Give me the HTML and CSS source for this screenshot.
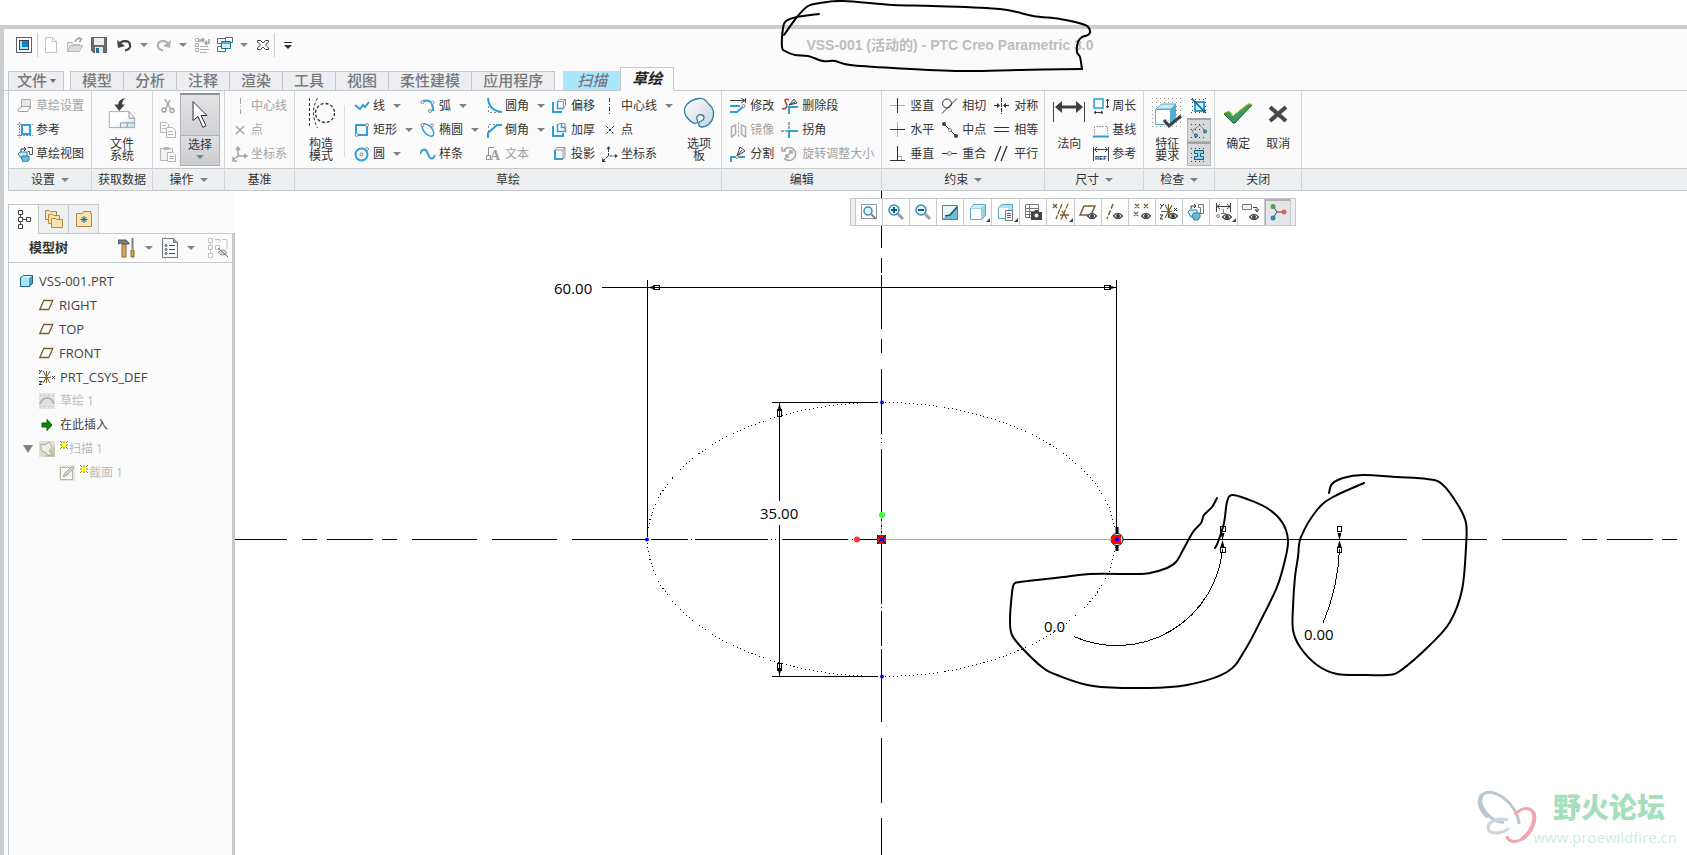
FILE: index.html
```html
<!DOCTYPE html>
<html lang="zh-CN">
<head>
<meta charset="UTF-8">
<title>VSS-001 (活动的) - PTC Creo Parametric 3.0</title>
<link rel="stylesheet" href="styles.css">
</head>
<body>
<svg width="0" height="0" class="defs">
  <symbol id="eye" viewBox="0 0 10 8"><path d="M.5 4q4.500-5.500 9 0-4.500 5-9 0z" fill="#fff" stroke="#3c4043" stroke-width="1.200"/><circle cx="5" cy="4" r="2" fill="#3c4043"/></symbol>
  <symbol id="plane" viewBox="0 0 15 14"><path d="M.8 11.500l4-9h9l-4 9z" fill="none" stroke="#7c5f2e" stroke-width="1.300"/></symbol>
  <symbol id="star" viewBox="0 0 8 8"><path d="M2 2h4v4H2z" fill="#ff0"/><path d="M0 0l2 2M4 0v2M8 0L6 2M0 4h2M8 4H6M0 8l2-2M4 8V6M8 8L6 6" stroke="#8a8a00"/></symbol>
</svg>
<div class="window">
  <header class="titlebar">
    <div class="quick">
      <button class="qbtn" title="窗口"><svg width="16" height="16" viewBox="0 0 16 16"><rect x=".5" y=".5" width="15" height="15" fill="#fff" stroke="#5c6063"/><rect x="3.5" y="3.5" width="9" height="9" fill="#b9e3f5" stroke="#3c4043"/><path d="M6 4h6v6H6z" fill="#0c86cc"/></svg></button>
      <span class="qsep"></span>
      <button class="qbtn new" title="新建"><svg width="16" height="18" viewBox="0 0 16 18"><path d="M2.500 1.500h7l4 4v11h-11z" fill="#fff" stroke="#c2c4c6"/><path d="M9.500 1.500v4h4" fill="none" stroke="#c2c4c6"/></svg></button>
      <button class="qbtn" title="打开"><svg width="18" height="16" viewBox="0 0 18 16"><path d="M1.500 14.500v-9h5l1 2h6v2" fill="#e7e8e9" stroke="#b9bbbd"/><path d="M1.500 14.500l3-6h12l-3 6z" fill="#d9dbdc" stroke="#b9bbbd"/><path d="M9 5c1-3 4-4 6-3M12.500 0l3 2-2 3" fill="none" stroke="#a4a6a8" stroke-width="1.500"/></svg></button>
      <button class="qbtn" title="保存"><svg width="16" height="16" viewBox="0 0 16 16"><path d="M.5.5h15v15h-13l-2-2z" fill="#6b6f72" stroke="#5b5f62"/><path d="M3 1h10v7H3z" fill="#eceeef"/><path d="M4 10h8v6H4z" fill="#dfe8ec"/><path d="M5 11h3v5H5z" fill="#2d6d8c"/></svg></button>
      <button class="qbtn undo" title="撤消"><svg width="17" height="14" viewBox="0 0 17 14"><path d="M3 7c2-5 10-5 11-.5 1 4-2 5.500-5 6" fill="none" stroke="#404447" stroke-width="2.200"/><path d="M1 2l1 8 7-2z" fill="#404447"/></svg></button>
      <i class="caret"></i>
      <button class="qbtn" title="重做"><svg width="17" height="14" viewBox="0 0 17 14"><path d="M14 7c-2-5-10-5-11-.5-1 4 2 5.500 5 6" fill="none" stroke="#b0b2b4" stroke-width="2.200"/><path d="M16 2l-1 8-7-2z" fill="#b0b2b4"/></svg></button>
      <i class="caret"></i>
      <button class="qbtn" title="重新生成"><svg width="16" height="16" viewBox="0 0 16 16" fill="none" stroke="#b0b2b4"><path d="M1.500 1.500h3v3h-3zM1.500 6.500h3v3h-3zM1.500 11.500h3v3h-3zM6 9.500h8M6 12.500h9M6 15.500h7"/><path d="M6 5V3h3M8 1l2 2-2 2M15 2v4h-4M13 4l-2 2 2 2" stroke="#a0a2a4" stroke-width="1.500"/></svg></button>
      <button class="qbtn" title="窗口列表"><svg width="16" height="16" viewBox="0 0 16 16"><g fill="#fff" stroke="#65696c"><path d="M.5 1.500h8v5h-8zM.5 9.500h8v5h-8zM8.500.5h7v5h-7z"/></g><path d="M4.500 4.500h9v7h-9z" fill="#d5effa" stroke="#19749f"/><path d="M5 5h8v2H5z" fill="#56b3dc"/></svg></button>
      <i class="caret"></i>
      <button class="qbtn closewin" title="关闭窗口"><svg width="12" height="12" viewBox="0 0 12 12"><path d="M.5 1.500h3L6 4l2.500-2.500h3v1.500L8.500 6l3 3v1.500h-3L6 8l-2.500 2.500h-3V9l3-3-3-3z" fill="#fff" stroke="#404447"/></svg></button>
      <span class="qsep"></span>
      <button class="qbtn custom" title="自定义"><svg width="10" height="9" viewBox="0 0 10 9"><path d="M1 1.500h8" stroke="#2d3033"/><path d="M1 4h8L5 8z" fill="#2d3033"/></svg></button>
    </div>
    <h1 class="title">VSS-001 (活动的) - PTC Creo Parametric 3.0</h1>
  </header>

  <nav class="tabs">
    <button class="tab file">文件<i class="caret dark"></i></button>
    <div class="tabset">
      <button class="tab">模型</button><button class="tab">分析</button><button class="tab">注释</button><button class="tab">渲染</button><button class="tab">工具</button><button class="tab">视图</button><button class="tab">柔性建模</button><button class="tab">应用程序</button>
    </div>
    <button class="tab scan">扫描</button>
    <button class="tab active">草绘</button>
  </nav>

  <div class="ribbon">
    <section class="group setup">
      <div class="tools">
        <div class="col">
          <button class="cmd" disabled><svg width="16" height="16" viewBox="0 0 16 16"><path d="M4.500 1.500h9v9h-9z" fill="#e6e7e8" stroke="#aaacae"/><path d="M.5 11.500l5-3h8l-3 5h-9z" fill="#fafafa" stroke="#9fa1a3"/></svg>草绘设置</button>
          <button class="cmd"><svg width="16" height="16" viewBox="0 0 16 16"><path d="M2.500 0v16M0 13.500h16M0 2.500h16" stroke="#8b8e90" stroke-dasharray="2 1"/><path d="M5 3h8v9H5z" fill="#fff" stroke="#2b9fd6" stroke-width="2"/></svg>参考</button>
          <button class="cmd"><svg width="16" height="16" viewBox="0 0 16 16"><path d="M4 6V3h4M7 1l2 2-2 2" fill="none" stroke="#33373a"/><path d="M10.500 1.500h5v7h-3v-3h-2" fill="none" stroke="#55595c"/><path d="M1 8l2-2h7v5l-2 2H5z" fill="#c8e8f5" stroke="#247fa8"/><path d="M4 11l2-1h6v4l-2 2H6z" fill="#6fb9d6" stroke="#247fa8"/></svg>草绘视图</button>
        </div>
      </div>
      <div class="label"><button>设置<i class="caret"></i></button></div>
    </section>

    <section class="group narrow">
      <div class="tools">
        <button class="big"><svg width="32" height="32" viewBox="0 0 32 34"><defs><linearGradient id="sheet" x2="1" y2="1"><stop offset=".5" stop-color="#fff"/><stop offset="1" stop-color="#b8d8e6"/></linearGradient></defs><path d="M2.500 15.500h21l6 7v10h-27z" fill="url(#sheet)" stroke="#a6a9ac"/><path d="M23.500 15.500v7h6M14.500 32.500v-5h15M21.500 28v4" fill="none" stroke="#8d9093"/><path d="M20 1c-6 1-8 4-8 7H8l5 7 6-7h-3c0-3 1-5 4-7z" fill="#3c4043"/></svg><span>文件<br>系统</span></button>
      </div>
      <div class="label">获取数据</div>
    </section>

    <section class="group ops">
      <div class="tools">
        <div class="col">
          <button class="cmd" disabled title="剪切"><svg width="16" height="16" viewBox="0 0 16 16" fill="none" stroke="#a3a5a7" stroke-width="1.500"><path d="M5 1l5 9M10 2L6 10"/><circle cx="4" cy="12" r="2"/><path d="M10 10l3 1"/><circle cx="12" cy="12.500" r="2"/></svg></button>
          <button class="cmd" disabled title="复制"><svg width="16" height="16" viewBox="0 0 16 16" fill="#fafafa" stroke="#b4b6b8"><path d="M.5.500h6l2 2v8h-8zM2 3.500h4M2 6.500h4"/><path d="M6.500 5.500h6l3 3v7h-9zM8 9.500h5M8 12.500h5"/></svg></button>
          <button class="cmd" disabled title="粘贴"><svg width="16" height="16" viewBox="0 0 16 16" fill="#f2f2f2" stroke="#b4b6b8"><path d="M.5 2.500h12v12H.5z"/><path d="M4 1.500h5v2H4z" fill="#b4b6b8"/><path d="M7.500 6.500h6l2 2v7h-8zM9 10.500h5M9 12.500h5" fill="#fff"/></svg></button>
        </div>
        <button class="select"><span class="select-icon"><svg width="18" height="30" viewBox="0 0 18 30"><path d="M2 1.500v19l5-4 5 11 3-2-5-10h6z" fill="#fff" stroke="#2c2f32"/></svg></span><span class="select-text">选择<i class="caret"></i></span></button>
      </div>
      <div class="label"><button>操作<i class="caret"></i></button></div>
    </section>

    <section class="group">
      <div class="tools">
        <div class="col">
          <button class="cmd" disabled><svg width="16" height="16" viewBox="0 0 16 16"><path d="M8.500 0v16" stroke="#a3a5a7" stroke-dasharray="6 2 1 2"/></svg>中心线</button>
          <button class="cmd" disabled><svg width="16" height="16" viewBox="0 0 16 16"><path d="M4 4l8 8M12 4l-8 8" stroke="#a3a5a7" stroke-width="1.500"/></svg>点</button>
          <button class="cmd" disabled><svg width="16" height="16" viewBox="0 0 16 16" fill="none" stroke="#a3a5a7" stroke-width="1.500"><path d="M6 2v8h8M6 10l-5 4M4 4l2-3 2 3M12 8l3 2-3 2M1 11v4h4"/></svg>坐标系</button>
        </div>
      </div>
      <div class="label">基准</div>
    </section>

    <section class="group sketch">
      <div class="tools">
        <button class="big"><svg width="28" height="32" viewBox="0 0 28 32" fill="none" stroke="#2d3033" stroke-dasharray="3 2"><path d="M2.500 1v30M10.500 1q-8 14 0 30"/><circle cx="18" cy="16" r="9.500" stroke-width="1.300"/></svg><span>构造<br>模式</span></button>
        <i class="vsep"></i>
        <div class="col">
          <button class="cmd"><svg width="16" height="16" viewBox="0 0 16 16"><path d="M1 7l5 4 3-4 2 2 4-5" fill="none" stroke="#2b9fd6" stroke-width="2"/></svg>线<i class="caret"></i></button>
          <button class="cmd"><svg width="16" height="16" viewBox="0 0 16 16"><path d="M2 3h11v10H2z" fill="none" stroke="#2b9fd6" stroke-width="2"/><g fill="#fff" stroke="#85888a"><circle cx="13" cy="3" r="1.500"/><circle cx="2.500" cy="13" r="1.500"/></g></svg>矩形<i class="caret"></i></button>
          <button class="cmd"><svg width="16" height="16" viewBox="0 0 16 16"><circle cx="7.500" cy="8.500" r="6" fill="none" stroke="#2b9fd6" stroke-width="2"/><circle cx="7.500" cy="8.500" r="1.500" fill="#fff" stroke="#73777a"/><circle cx="13" cy="3" r="1.500" fill="#fff" stroke="#85888a"/></svg>圆<i class="caret"></i></button>
        </div>
        <div class="col">
          <button class="cmd"><svg width="16" height="16" viewBox="0 0 16 16"><path d="M3 3q10-3 10 10" fill="none" stroke="#2b9fd6" stroke-width="2"/><g fill="#fff" stroke="#85888a"><circle cx="2.500" cy="4" r="1.500"/><circle cx="12.500" cy="4.500" r="1.500"/><circle cx="10" cy="13" r="1.500"/></g></svg>弧<i class="caret"></i></button>
          <button class="cmd"><svg width="16" height="16" viewBox="0 0 16 16"><ellipse cx="8" cy="8" rx="7.500" ry="4" transform="rotate(48 8 8)" fill="none" stroke="#2b9fd6" stroke-width="1.500"/><g fill="#fff" stroke="#85888a"><circle cx="2.500" cy="3" r="1.500"/><circle cx="12" cy="3.500" r="1.500"/></g></svg>椭圆<i class="caret"></i></button>
          <button class="cmd"><svg width="16" height="16" viewBox="0 0 16 16"><path d="M0 8c2-6 6-6 8 0s5 6 7 1" fill="none" stroke="#2b9fd6" stroke-width="2"/></svg>样条</button>
        </div>
        <div class="col">
          <button class="cmd"><svg width="16" height="16" viewBox="0 0 16 16"><path d="M2.500 0v14.500H16" fill="none" stroke="#8b8e90" stroke-dasharray="2 2"/><path d="M2 0q1 13 14 14" fill="none" stroke="#2b9fd6" stroke-width="2"/></svg>圆角<i class="caret"></i></button>
          <button class="cmd"><svg width="16" height="16" viewBox="0 0 16 16"><path d="M2.500 10V2.500H10" fill="none" stroke="#8b8e90" stroke-dasharray="2 2"/><path d="M2 16v-5l9-8h5" fill="none" stroke="#2b9fd6" stroke-width="2"/></svg>倒角<i class="caret"></i></button>
          <button class="cmd" disabled><svg width="16" height="16" viewBox="0 0 16 16"><path d="M.5 9.500h4v4h-4zM2.500 9V1.500H8" fill="none" stroke="#8b8e90"/><text x="4" y="14" class="glyph-a">A</text></svg>文本</button>
        </div>
        <div class="col">
          <button class="cmd"><svg width="16" height="16" viewBox="0 0 16 16" fill="none"><path d="M1 4v10h9" stroke="#2b9fd6" stroke-width="2"/><path d="M5.500 3v7.500H12" stroke="#2b9fd6" stroke-width="1.500"/><path d="M5.500 3.500l2-2h6v6l-2 3v-7h-6M11.500 3.500l2-2" stroke="#909396"/></svg>偏移</button>
          <button class="cmd"><svg width="16" height="16" viewBox="0 0 16 16" fill="none"><path d="M1 4v10h10v-3" stroke="#2b9fd6" stroke-width="2"/><path d="M5.500 2v7.500h8V5.500h-4V2" stroke="#2b9fd6" stroke-width="1.500"/><path d="M6 2.500l2-1h5v7" stroke="#909396"/></svg>加厚</button>
          <button class="cmd"><svg width="16" height="16" viewBox="0 0 16 16" fill="none"><path d="M3 4v9h8" stroke="#2b9fd6" stroke-width="2"/><path d="M3 3.500l2-2h8v9L11 13V4H3M11 4l2-2" stroke="#909396"/></svg>投影</button>
        </div>
        <div class="col">
          <button class="cmd"><svg width="16" height="16" viewBox="0 0 16 16"><path d="M7.500 0v16" stroke="#2d3033" stroke-dasharray="4 2 1 2"/></svg>中心线<i class="caret"></i></button>
          <button class="cmd"><svg width="16" height="16" viewBox="0 0 16 16"><path d="M4 4l8 8M12 4l-8 8" stroke="#2d3033" stroke-dasharray="3 1"/></svg>点</button>
          <button class="cmd"><svg width="16" height="16" viewBox="0 0 16 16" fill="none" stroke="#3c4043"><path d="M6.500 3v7H13M6 10l-5 5" stroke-dasharray="3 1"/><path d="M4.500 3h4l-2-3zM13 8v4l3-2zM0 12v4h4z" fill="#3c4043" stroke="none"/></svg>坐标系</button>
        </div>
        <button class="big palette"><svg width="32" height="32" viewBox="0 0 32 32"><defs><linearGradient id="pal" x2="1" y2="1"><stop offset="0" stop-color="#fff"/><stop offset="1" stop-color="#c4d3da"/></linearGradient></defs><path d="M16 1.500c5-1 8 3 10 6 5 4 5 8 4 13-1 5-6 9-11 9.500-4 0-4-4-2-5.500 3-1 4-2 4-4 0-3-5-4-7-1-1 3 2 5 0 6.500-4 2-8-3-11-7C-2 10 6 3 16 1.500z" fill="url(#pal)" stroke="#2a7ca5" stroke-width="1.300"/></svg><span>选项<br>板</span></button>
      </div>
      <div class="label">草绘</div>
    </section>

    <section class="group edit">
      <div class="tools">
        <div class="col">
          <button class="cmd"><svg width="18" height="16" viewBox="0 0 18 16" fill="none"><path d="M1 2.500h15M16.500 0v5M12 0l4 2.500-4 2.500" stroke="#3c4043"/><path d="M1 8h10M1 14h7l7-6" stroke="#2b9fd6" stroke-width="2"/><circle cx="14.500" cy="8" r="1.500" stroke="#85888a" fill="#fff"/></svg>修改</button>
          <button class="cmd" disabled><svg width="18" height="16" viewBox="0 0 18 16" fill="none" stroke="#aeb0b2"><path d="M9.500 0v16" stroke-dasharray="3 1"/><path d="M2.500 5l4-2v9l-4 3zM16.500 5l-4-2v9l4 3z" stroke-width="1.500"/></svg>镜像</button>
          <button class="cmd"><svg width="18" height="16" viewBox="0 0 18 16" fill="none"><path d="M2 16v-5h5M10 11h6" stroke="#2b9fd6" stroke-width="2"/><path d="M8 10l3-9 5 4zM8 10l5-6" stroke="#3c4043"/><circle cx="8" cy="11" r="1.500" fill="#fff" stroke="#85888a"/></svg>分割</button>
        </div>
        <div class="col">
          <button class="cmd"><svg width="18" height="16" viewBox="0 0 18 16" fill="none"><path d="M8 2c-4-2-5 0-3 3s1 6-4 6" stroke="#a8443f" stroke-width="1.500"/><path d="M8 16V9h9" stroke="#2b9fd6" stroke-width="2"/><path d="M8 7l5-6 3 4zM8 7l6-3" stroke="#3c4043"/></svg>删除段</button>
          <button class="cmd"><svg width="18" height="16" viewBox="0 0 18 16" fill="none"><path d="M8 0v7M0 9h7" stroke="#a3a5a7" stroke-width="2" stroke-dasharray="3 1"/><path d="M8 16V9h9" stroke="#2b9fd6" stroke-width="2"/></svg>拐角</button>
          <button class="cmd" disabled><svg width="18" height="16" viewBox="0 0 18 16" fill="none" stroke="#a3a5a7" stroke-width="1.500"><path d="M3 12A6.500 6.500 0 1 0 3 4M1 1v4h4M5 11l6-6M11 8V5H8M5 8v3h3"/></svg>旋转调整大小</button>
        </div>
      </div>
      <div class="label">编辑</div>
    </section>

    <section class="group constrain">
      <div class="tools">
        <div class="col">
          <button class="cmd"><svg width="18" height="16" viewBox="0 0 18 16"><path d="M1 7.500h15" stroke="#a9acae"/><path d="M8.500 0v15" stroke="#2d3033"/></svg>竖直</button>
          <button class="cmd"><svg width="18" height="16" viewBox="0 0 18 16"><path d="M8.500 0v15" stroke="#a9acae"/><path d="M1 7.500h15" stroke="#2d3033"/></svg>水平</button>
          <button class="cmd"><svg width="18" height="16" viewBox="0 0 18 16"><path d="M9 10.500h3.500V14" fill="none" stroke="#a9acae"/><path d="M8.500 0v14M1 14.500h15" stroke="#2d3033"/></svg>垂直</button>
        </div>
        <div class="col">
          <button class="cmd"><svg width="18" height="16" viewBox="0 0 18 16" fill="none" stroke="#2d3033"><circle cx="6" cy="5.500" r="4.500"/><path d="M1 15.500L16 .5"/></svg>相切</button>
          <button class="cmd"><svg width="18" height="16" viewBox="0 0 18 16"><path d="M3 2l12 12" stroke="#3c4043"/><circle cx="3" cy="2" r="2" fill="#3c4043"/><circle cx="15" cy="14" r="2" fill="#3c4043"/><circle cx="9" cy="8" r="1.500" fill="#fff" stroke="#85888a"/></svg>中点</button>
          <button class="cmd"><svg width="18" height="16" viewBox="0 0 18 16"><path d="M1 7.500h15" stroke="#2d3033"/><circle cx="8.500" cy="7.500" r="2" fill="#eee" stroke="#85888a"/></svg>重合</button>
        </div>
        <div class="col">
          <button class="cmd"><svg width="18" height="16" viewBox="0 0 18 16"><path d="M8.500 0v16" stroke="#2d3033" stroke-dasharray="4 1"/><path d="M1 7.500h5M11 7.500h5" stroke="#2d3033"/><path d="M4 5l3 2.500L4 10zM13 5l-3 2.500 3 2.500z" fill="#2d3033"/></svg>对称</button>
          <button class="cmd"><svg width="18" height="16" viewBox="0 0 18 16"><path d="M1 5.500h15M1 9.500h15" stroke="#2d3033"/></svg>相等</button>
          <button class="cmd"><svg width="18" height="16" viewBox="0 0 18 16"><path d="M2 15L8 0M8 15l6-15" stroke="#2d3033" stroke-width="1.300"/></svg>平行</button>
        </div>
      </div>
      <div class="label"><button>约束<i class="caret"></i></button></div>
    </section>

    <section class="group size">
      <div class="tools">
        <button class="big"><svg width="32" height="32" viewBox="0 0 32 32"><path d="M.5 5v20M31.500 5v20" stroke="#3c4043"/><path d="M4 10h24" stroke="#3c4043" stroke-width="3"/><path d="M2 10l7-6v12zM30 10l-7-6v12z" fill="#3c4043"/></svg><span>法向</span></button>
        <div class="col">
          <button class="cmd"><svg width="16" height="16" viewBox="0 0 16 16" fill="none"><path d="M1 1h9v9H1z" stroke="#2b9fd6" stroke-width="1.500"/><path d="M14.500 1v9M13 3l1.500-2L16 3M13 8l1.500 2L16 8M1 14.500h9M3 13l-2 1.500L3 16M8 13l2 1.500L8 16" stroke="#3c4043"/></svg>周长</button>
          <button class="cmd"><svg width="16" height="16" viewBox="0 0 16 16" fill="none"><path d="M1.500 12V4.500h13V12" stroke="#9b9ea0" stroke-dasharray="2 1"/><path d="M0 14.500h16" stroke="#2b9fd6" stroke-width="2"/></svg>基线</button>
          <button class="cmd"><svg width="16" height="16" viewBox="0 0 16 16" fill="none"><path d="M.5 1v14M15.500 1v14M2 3.500h12M4 1L1.500 3.500 4 6M12 1l2.500 2.500L12 6" stroke="#3c4043"/><text x="2" y="14" class="glyph-ref">REF</text></svg>参考</button>
        </div>
      </div>
      <div class="label"><button>尺寸<i class="caret"></i></button></div>
    </section>

    <section class="group check">
      <div class="tools">
        <button class="big"><svg width="32" height="32" viewBox="0 0 32 32"><path d="M1 1.500h30M1 5.500h30M1 9.500h30M1 13.500h30M1 17.500h30M1 21.500h30M1 25.500h30M1 29.500h30" stroke="#9b9ea0" stroke-dasharray="1 3"/><path d="M5 12l6-5h14l-5 5z" fill="#c8ecf8" stroke="#57aacb"/><path d="M20 12l5-5v14l-5 7z" fill="#55aed2"/><path d="M4.500 12.500h15v15h-15z" fill="#fff" stroke="#57aacb"/><path d="M13 23l5 6L30 19" fill="none" stroke="#3c4043" stroke-width="3"/></svg><span>特征<br>要求</span></button>
        <div class="col">
          <button class="toggle" title="重叠几何"><svg width="16" height="16" viewBox="0 0 16 16"><path d="M0 1.500h16M0 14.500h16M1.500 0v16M14.500 0v16" stroke="#3c4043" stroke-dasharray="1 3"/><path d="M4 4h9v9H4z" fill="#d9f1fb" stroke="#2b9fd6" stroke-width="2"/><path d="M1 1l14 14" stroke="#155a7d" stroke-width="1.500"/></svg></button>
          <button class="toggle on" title="突出显示开放端"><svg width="16" height="16" viewBox="0 0 16 16"><path d="M0 1.500h16M0 6.500h16M0 14.500h16" stroke="#3c4043" stroke-dasharray="1 3"/><path d="M4 12L1 8l8-6 5 6" fill="none" stroke="#85888a"/><g fill="#45b2e0" stroke="#155a7d"><circle cx="5" cy="12.500" r="1.500"/><circle cx="14" cy="8.500" r="1.500"/></g></svg></button>
          <button class="toggle on" title="着色封闭环"><svg width="16" height="16" viewBox="0 0 16 16"><path d="M0 1.500h16M0 6.500h16M0 10.500h16M0 14.500h16" stroke="#3c4043" stroke-dasharray="1 3"/><path d="M3.500 3.500h9v3h-3v3h3v3h-9v-3h3v-3h-3z" fill="#8fd3ee" stroke="#155a7d"/></svg></button>
        </div>
      </div>
      <div class="label"><button>检查<i class="caret"></i></button></div>
    </section>

    <section class="group close">
      <div class="tools">
        <button class="big"><svg width="32" height="32" viewBox="0 0 32 32"><path d="M2 17l5-3 4 5L26 7l4 1L13 26h-2z" fill="#3a9b62" stroke="#2a5c30"/><path d="M2 16l5-2 4 5L26 7h4" fill="none" stroke="#c9e600"/></svg><span>确定</span></button>
        <button class="big"><svg width="32" height="32" viewBox="0 0 32 32"><path d="M8 10l16 14M24 10L8 24" stroke="#45494c" stroke-width="4"/></svg><span>取消</span></button>
      </div>
      <div class="label">关闭</div>
    </section>
    <div class="rest"><div class="label"></div></div>
  </div>

  <main class="main">
    <aside class="side">
      <div class="side-tabs">
        <button class="stab current" title="模型树"><svg width="16" height="20" viewBox="0 0 16 20" fill="none" stroke="#3c4043"><path d="M1.500 1.500h4v4h-4zM1.500 8.500h4v4h-4zM1.500 15.500h4v4h-4zM9.500 8.500h4v4h-4zM3.500 6v2M3.500 13v2M6 10.500h3"/></svg></button>
        <button class="stab" title="文件夹浏览器"><svg width="20" height="20" viewBox="0 0 20 20" fill="#fae3b2" stroke="#b08a48"><path d="M1.500 10.500v-9h4l1 1h6v8z"/><path d="M4.500 14.500v-9h4l1 1h6v8z"/><path d="M7.500 18.500v-9h4l1 1h6v8z"/></svg></button>
        <button class="stab" title="收藏夹"><svg width="18" height="18" viewBox="0 0 18 18"><path d="M1.500 16.500v-13h6l1-2h7v2h1v13z" fill="#fae3b2" stroke="#b08a48"/><path d="M9 6v7M5.500 9.500h7M6.500 7l5 5M11.500 7l-5 5" stroke="#12688f"/></svg></button>
      </div>
      <div class="panel">
        <div class="panel-head">
          <h2>模型树</h2>
          <button class="pbtn" title="设置"><svg width="18" height="20" viewBox="0 0 18 20"><path d="M4 6h4v13H4z" fill="#d9a860" stroke="#8a6226"/><path d="M0 2h8l3 3v1H8L3 5 0 6z" fill="#7d8082" stroke="#505356"/><path d="M14.500 0v11" stroke="#7d8082" stroke-width="2"/><path d="M13 12h3v7h-3z" fill="#d9a860" stroke="#8a6226"/></svg></button>
          <i class="caret"></i>
          <button class="pbtn" title="显示"><svg width="16" height="20" viewBox="0 0 16 20"><path d="M.5.5h11l4 4v15H.5z" fill="#f4f8fa" stroke="#73777a"/><path d="M11.500.5v4h4" fill="#8fb3c4" stroke="#73777a"/><path d="M7 7.500h6M7 11.500h6M7 15.500h6" stroke="#505356"/><g fill="none" stroke="#505356"><circle cx="4" cy="7.500" r="1"/><circle cx="4" cy="11.500" r="1"/><circle cx="4" cy="15.500" r="1"/></g></svg></button>
          <i class="caret"></i>
          <button class="pbtn last" title="过滤"><svg width="20" height="20" viewBox="0 0 20 20" fill="none" stroke="#c0c2c4"><path d="M.5.500h4v4h-4zM.5 7.500h4v4h-4zM.5 15.500h4v4h-4zM2.500 5v2M2.500 12v3M7.500 7.500h4v4h-4zM7 1.500h5v3M14 1.500h5v10"/><path d="M10 14.500q5-5 9 0-4 5-9 0z" fill="#ddd" stroke="#8a8d90"/><path d="M10 10l10 9" stroke="#606366"/></svg></button>
        </div>
        <ul class="tree">
          <li class="latin"><svg width="15" height="14" viewBox="0 0 15 14"><path d="M1.500 3.500l3-2h9v8l-3 3h-9z" fill="#3ba3cb" stroke="#22617d"/><path d="M2 4h8v8H2z" fill="#a5e6fb"/><path d="M2 3.500L4.500 2H13l-3 2z" fill="#dff6fd"/></svg>VSS-001.PRT</li>
          <li class="l1 latin"><svg width="15" height="14"><use href="#plane"/></svg>RIGHT</li>
          <li class="l1 latin"><svg width="15" height="14"><use href="#plane"/></svg>TOP</li>
          <li class="l1 latin"><svg width="15" height="14"><use href="#plane"/></svg>FRONT</li>
          <li class="l1 latin"><svg width="16" height="16" viewBox="0 0 16 16" fill="none"><path d="M0 8.500h12M7.500 2v12M4 2l7 12M11 2L4 14" stroke="#7c5f2e"/><path d="M0 1l1.500 2L3 1M1.500 3L0 5M13 7l3 3M16 7l-3 3M0 12.500h3l-3 3h3" stroke="#2d3033"/></svg>PRT_CSYS_DEF</li>
          <li class="l1 off"><svg width="16" height="16" viewBox="0 0 16 16"><path d="M0 0h16v16H0z" fill="#e2e2e0"/><path d="M1 2.500h15M1 13.500h15" stroke="#b5b5b0" stroke-dasharray="1 3"/><path d="M1 11q2-6 7-6t7 6" fill="none" stroke="#b9b7a3" stroke-width="2"/></svg>草绘 1</li>
          <li class="l1"><svg width="16" height="14" viewBox="0 0 16 14"><path d="M3 5h5V1.500L13 7l-5 5.500V9H3z" fill="#078a07" stroke="#0a5c0a"/></svg>在此插入</li>
          <li class="open off"><i class="twisty"></i><svg width="16" height="16" viewBox="0 0 16 16"><path d="M0 0h16v16H0z" fill="#dedede"/><path d="M16 5v11H4z" fill="#c9c8b4"/><path d="M2 3l4 1 4-3 3 5-3 4 4 4H9l-3-3H4L2 8z" fill="#f0efe2" stroke="#a9a892"/></svg><span class="new"><svg width="8" height="8"><use href="#star"/></svg></span>扫描 1</li>
          <li class="l2 off"><svg width="16" height="16" viewBox="0 0 16 16"><path d="M0 0h16v16H0z" fill="#e6e6e4"/><path d="M1.500 2.500h12v12h-12z" fill="#fafafa" stroke="#b9b7a3"/><path d="M4 12l2-4 7-7 2 2-7 7z" fill="#d6d5c8" stroke="#a9a892"/></svg><span class="new"><svg width="8" height="8"><use href="#star"/></svg></span>截面 1</li>
        </ul>
      </div>
    </aside>

    <div class="canvas">
      <svg class="drawing" width="100%" height="100%">
        <g transform="translate(-235 -191)">
          <path class="ln" d="M235 539.500h52M302 539.500h15M327 539.500h46M382 539.500h15M412 539.500h65M492 539.500h65M572 539.500h76M651 539.500h37M691 539.500h1M695 539.500h73M771 539.500h1M775 539.500h1M782 539.500h66M852 539.500h1M857 539.500h25M1117 539.500h290M1422 539.500h65M1502 539.500h65M1582 539.500h15M1607 539.500h46M1662 539.500h15"/>
          <path class="ln" d="M881.500 191v22M881.500 226v22M881.500 258v15M881.500 275v54M881.500 339v14M881.500 369v65M881.500 438v1M881.500 442v1M881.500 449v155M881.500 607v1M881.500 611v35M881.500 649v73M881.500 738v65M881.500 818v37"/>
          <ellipse class="ln" cx="881.500" cy="539.500" rx="234" ry="137" stroke-dasharray="1 3"/>
          <path class="ln" d="M602 287.500h514M647.500 280v257M1116.500 280v250M772 402.500h106M772 676.500h106M779.500 403v98M779.500 525v151"/>
          <path class="tip" d="M648 287.500l7-2v4zM1116 287.500l-7-2v4zM779.500 403l-2 8h4zM779.500 676l-2-8h4zM1222.500 540l-2-7h4zM1222.500 540l-2 7h4zM1339.500 540l-2-7h4zM1339.500 540l-2 7h4z"/>
          <path class="ln" d="M653.500 285.500h6v4h-6zM1104.500 285.500h6v4h-6zM777.500 409.500h4v7h-4zM777.500 663.500h4v7h-4zM1220.500 526.500h5v5h-5zM1220.500 547.500h5v5h-5zM1337.500 526.500h4v5h-4zM1337.500 547.500h4v5h-4z"/>
          <path d="M882 539.500h228" stroke="#f5a623"/>
          <path d="M881.500 515v23" stroke="#2ee62e" stroke-dasharray="4 2"/>
          <path class="ln" d="M1074 636.500A106 106 0 0 0 1222.500 549M1323 623Q1338 588 1339.500 549"/>
          <circle cx="857" cy="539.500" r="3" fill="#f33"/>
          <circle cx="882" cy="515" r="3" fill="#3f3"/>
          <path d="M877 535h9v9h-9z" fill="#f00"/>
          <path class="ln" d="M877 535l9 9M886 535l-9 9"/>
          <path d="M1117 527v24" stroke="#000" stroke-width="3"/>
          <circle cx="1117" cy="539.500" r="6" fill="#fff" stroke="#000"/>
          <path d="M1112 535h9v9h-9z" fill="#f00"/>
          <g fill="#00f"><circle cx="647" cy="539.500" r="2"/><circle cx="882" cy="402.500" r="2"/><circle cx="882" cy="676.500" r="2"/><circle cx="882" cy="539.500" r="2"/><circle cx="1117" cy="539.500" r="2"/></g>
          <g class="dim"><text x="554" y="294">60.00</text><text x="760" y="519">35.00</text><text x="1044" y="632">0.0</text><text x="1304" y="640">0.00</text></g>
        </g>
      </svg>

      <div class="viewbar">
        <button title="重新调整"><svg width="18" height="18" viewBox="0 0 18 18" fill="none"><path d="M1.500 1.500h15v14h-15z" stroke="#909396"/><circle cx="8" cy="8" r="4" fill="#e4f5fb" stroke="#348eb5" stroke-width="1.500"/><path d="M11 11l5 5" stroke="#85888a" stroke-width="2"/></svg></button>
        <button title="放大"><svg width="18" height="18" viewBox="0 0 18 18" fill="none"><circle cx="7" cy="7" r="5" fill="#e4f5fb" stroke="#348eb5" stroke-width="1.500"/><path d="M4 7h6M7 4v6" stroke="#155a7d" stroke-width="2"/><path d="M11 11l5 5" stroke="#9b9ea0" stroke-width="3"/></svg></button>
        <button title="缩小"><svg width="18" height="18" viewBox="0 0 18 18" fill="none"><circle cx="7" cy="7" r="5" fill="#e4f5fb" stroke="#348eb5" stroke-width="1.500"/><path d="M4 7h6" stroke="#155a7d" stroke-width="2"/><path d="M11 11l5 5" stroke="#9b9ea0" stroke-width="3"/></svg></button>
        <button title="重画"><svg width="18" height="18" viewBox="0 0 18 18"><path d="M1.500 2.500h15v14h-15z" fill="#74bbd6" stroke="#73777a"/><path d="M2 3h14L8 12l-6 3z" fill="#edf6fa"/><path d="M16 4l-7 8-5 1" fill="none" stroke="#155a7d" stroke-width="1.500"/></svg></button>
        <button class="more" title="显示样式"><svg width="18" height="18" viewBox="0 0 18 18"><path d="M1.500 5.500l3-4h12v11l-4 4h-11z" fill="#9fd0e2" stroke="#57aacb"/><path d="M2 6h10v10H2z" fill="#fff"/><path d="M2 5l3-3h11l-4 3z" fill="#d5eef7"/></svg></button>
        <button class="more" title="已保存方向"><svg width="18" height="18" viewBox="0 0 18 18"><path d="M1.500 4.500l3-3h11v11l-3 3h-11z" fill="#b9dfec" stroke="#57aacb"/><path d="M2 5h9v10H2z" fill="#fff"/><path d="M8.500 7.500h7v10h-7z" fill="#fff" stroke="#73777a"/><path d="M10 10.500h4M10 12.500h4M10 14.500h4" stroke="#55595c"/></svg></button>
        <button title="视图管理器"><svg width="18" height="18" viewBox="0 0 18 18"><path d="M1.500 1.500h13v13h-13zM2 5.500h12M2 8.500h12M2 11.500h12M5.500 2v12" fill="#fff" stroke="#73777a"/><path d="M7 9h3l1-2h3l1 2h3v8H7z" fill="#404447"/><circle cx="12.500" cy="12.500" r="2" fill="#eee"/></svg></button>
        <button class="more" title="基准显示过滤器"><svg width="18" height="18" viewBox="0 0 18 18" fill="none" stroke="#7c5f2e" stroke-width="1.300"><path d="M1 1l4 4M5 1L1 5"/><path d="M10 1L4 16M16 1L9 17" stroke-dasharray="5 1"/><path d="M8 12h9M10 8l5 8"/></svg></button>
        <button title="平面显示"><svg width="18" height="18" viewBox="0 0 18 18" fill="none"><path d="M1 12l4-9h11l-4 9z" stroke="#7c5f2e" stroke-width="1.500"/><use href="#eye" x="8" y="9" width="10" height="8"/></svg></button>
        <button title="轴显示"><svg width="18" height="18" viewBox="0 0 18 18" fill="none"><path d="M7 1L1 16" stroke="#7c5f2e" stroke-width="1.500" stroke-dasharray="5 2"/><use href="#eye" x="7" y="9" width="10" height="8"/></svg></button>
        <button title="点显示"><svg width="18" height="18" viewBox="0 0 18 18" fill="none"><path d="M2 1l4 4M6 1L2 5M11 1l4 4M15 1l-4 4M1 9l4 4M5 9l-4 4" stroke="#7c5f2e" stroke-width="1.300"/><use href="#eye" x="8" y="9" width="10" height="8"/></svg></button>
        <button title="坐标系显示"><svg width="18" height="18" viewBox="0 0 18 18" fill="none"><path d="M1 8.500h11M8.500 1v14M5 2l6 10M12 2L5 15" stroke="#7c5f2e" stroke-width="1.200"/><path d="M0 1l2 2 2-2M2 3L0 6M14 5l3 3M17 5l-3 3M0 12h3l-3 4h3" stroke="#2d3033"/><use href="#eye" x="8" y="9" width="10" height="8"/></svg></button>
        <button title="草绘视图"><svg width="18" height="18" viewBox="0 0 18 18"><path d="M4 6V3h5M7 1l2 2-2 2" fill="none" stroke="#33373a"/><path d="M11.500 1.500h5v9h-3v-6h-2z" fill="#fff" stroke="#73777a"/><path d="M1 9l2-2h7v5l-2 2H4z" fill="#d5eef7" stroke="#247fa8"/><path d="M5 12l2-2h6v4l-2 3H7z" fill="#6fb9d6" stroke="#247fa8"/></svg></button>
        <button class="more" title="草绘器显示过滤器"><svg width="18" height="18" viewBox="0 0 18 18" fill="none"><path d="M1.500 0v9M15.500 0v9M2 3.500h13M5 1L2 3.500 5 6M12 1l3 2.500L12 6" stroke="#3c4043"/><path d="M6 10.500h5M8.500 6v4" stroke="#2b9fd6"/><circle cx="3" cy="13" r="1.500" fill="#eee" stroke="#85888a"/><use href="#eye" x="7" y="10" width="10" height="8"/></svg></button>
        <button title="注释显示"><svg width="18" height="18" viewBox="0 0 18 18" fill="none"><path d="M.5 1.500h9v5h-9z" fill="#fef1cf" stroke="#73777a"/><path d="M11 4.500h4v4M13 6l2 3 2-3" stroke="#3c4043"/><use href="#eye" x="7" y="10" width="10" height="8"/></svg></button>
        <button class="on" title="旋转中心"><svg width="18" height="18" viewBox="0 0 18 18"><path d="M4 3l4 6h6M8 9l-4 6" fill="none" stroke="#3c4043"/><circle cx="4" cy="3.500" r="2.500" fill="#4fa04a"/><circle cx="15" cy="9" r="2.500" fill="#e0605a"/><circle cx="4" cy="15" r="2.500" fill="#2e88b8"/></svg></button>
      </div>

      <div class="watermark">
        <svg width="60" height="58" viewBox="0 0 60 58" fill="none"><path d="M42 35C41 14 14-4 5 6c-6 10 10 29 22 27" stroke="#b9c7d3" stroke-width="3"/><path d="M5 6c-5 7-1 16 6 22" stroke="#b9c7d3" stroke-width="4"/><path d="M38 26c5-7 14-9 18-3 4 8-2 21-11 27-7 4-14 3-15-3" stroke="#f0a8ac" stroke-width="3"/><path d="M56 23c4 8-2 21-11 27" stroke="#f0a8ac" stroke-width="4"/><path d="M31 31c-9-3-20 1-20 8 1 7 15 6 21 0" stroke="#ced5de" stroke-width="3"/></svg>
        <div class="wm-text"><strong>野火论坛</strong><span>www.proewildfire.cn</span></div>
      </div>
    </div>
  </main>
</div>

<svg class="ink-layer" width="100%" height="100%">
  <path class="ink" data-pts="819,14 797,17 786,21 783,28 782,47 785,51 795,55 808,56 823,61 835,61 850,65 893,68 960,71 1020,70 1082,69"/>
  <path class="ink" data-pts="1082,69 1080,57 1077,52 1078,42 1082,37 1088,35 1090,31 1085,25 1060,19 1033,16 1000,9 933,6 893,5 843,1 820,3 808,6 797,17 784,35"/>
  <path class="ink" data-pts="1217,498 1212,507 1204,515 1201,523 1193,532 1183,550 1176,562 1167,568 1150,573 1137,574 1090,574 1063,577 1037,580 1020,582 1014,584 1012,593 1010,620 1012,635 1023,649 1042,667 1057,675 1093,686 1147,688 1187,685 1227,672 1245,650 1263,616 1277,587 1285,560 1288,540 1282,522 1267,508 1247,499 1232,495 1227,502 1224,523 1218,542 1215,548"/>
  <path class="ink" data-pts="1329,493 1332,484 1343,478 1363,475 1397,477 1427,479 1442,484 1458,505 1466,523 1466,547 1462,590 1450,622 1430,645 1400,671 1387,675 1367,675 1337,674 1317,665 1300,647 1293,630 1293,607 1295,577 1298,557 1301,537 1317,510 1333,497 1364,483"/>
</svg>
<script src="script.js"></script>
</body>
</html>
```
FILE: styles.css
```css
*{margin:0;padding:0;box-sizing:border-box;}
html,body{height:100%;overflow:hidden;}
body{background:#fff;color:#333;font:12px/16px "Liberation Sans","Noto Sans CJK SC",sans-serif;padding-top:25px;position:relative;}
button{background:none;border:0;font:inherit;color:inherit;display:flex;align-items:center;white-space:nowrap;}
svg{display:block;flex:none;}
ul{list-style:none;}
.defs{position:absolute;}

.window{height:100%;display:flex;flex-direction:column;background:#fbfbfb;border-top:4px solid #c8cdd1;border-left:4px solid #c8cdd1;}
.caret{flex:none;width:0;height:0;border:4px solid transparent;border-top:4px solid #808385;border-bottom:0;}
.caret.dark{border-top-color:#66696b;border-left-width:3px;border-right-width:3px;}

/* title bar */
.titlebar{height:38px;padding:0 0 6px 12px;display:flex;align-items:center;}
.quick{display:flex;align-items:center;gap:7px;}
.qsep{width:1px;height:24px;background:#c8cbce;margin:0 -2px;}
.undo,.closewin{margin-left:2px;}
.custom{margin-left:3px;}
.title{flex:1;padding-right:80px;text-align:center;font-size:14px;font-weight:bold;color:#bbbdbf;}

/* tabs */
.tabs{height:24px;padding-left:4px;display:flex;align-items:flex-end;border-bottom:1px solid #c5c9cc;}
.tab{height:20px;padding:0 11px;border:1px solid #c5c9cc;background:#eceef1;color:#77797b;font-size:15px;font-weight:500;margin-bottom:-1px;}
.tab.file{padding:0 7px 0 8px;gap:3px;margin-right:6px;}
.tabset{display:flex;border-left:1px solid #c5c9cc;margin-right:8px;}
.tabset .tab{border-left:0;}
.tab.scan{background:#abe6ff;border-color:#abe6ff #abe6ff #c5c9cc;border-right:0;padding:0 13px;font-style:italic;}
.tab.active{height:24px;background:#fbfbfb;border-bottom-color:#fbfbfb;color:#222;font-weight:bold;font-style:italic;}

/* ribbon */
.ribbon{display:flex;margin-left:4px;height:100px;border-left:1px solid #c5c9cc;border-bottom:1px solid #c5c9cc;}
.group{display:flex;flex-direction:column;border-right:1px solid #d3d6d9;}
.tools{flex:1;display:flex;gap:7px;padding:2px 7px 0;}
.label{height:22px;border-top:1px solid #c5c9cc;background:#edeff1;display:flex;align-items:center;justify-content:center;}
.label button{gap:6px;}
.rest{flex:1;display:flex;flex-direction:column;justify-content:flex-end;}
.col{display:flex;flex-direction:column;padding-top:1px;}
.cmd{height:24px;gap:3px;}
.cmd:disabled{color:#a0a2a4;}
.cmd .caret{margin-left:5px;}
.big{height:74px;flex-direction:column;padding-top:4px;line-height:12px;min-width:32px;gap:9px;}
.setup .tools{padding-left:8px;}
.narrow .tools{padding:2px 6px 0;justify-content:center;}
.narrow .label{padding:0 6px;}
.ops .tools{gap:4px;padding-right:4px;}
.select{flex-direction:column;width:40px;height:73px;border:1px solid #aeb1b4;border-top:2px solid #909396;}
.select-icon{width:100%;height:41px;display:flex;align-items:center;justify-content:center;background:linear-gradient(#e2e3e5,#cfd1d4);border-bottom:1px solid #aeb1b4;}
.select-text{width:100%;flex:1;display:flex;flex-direction:column;align-items:center;padding-top:1px;background:linear-gradient(#dfe0e2,#c9cbce);}
.select-text .caret{margin-top:2px;}
.sketch .tools{padding:2px 6px 0 10px;}
.vsep{width:1px;height:52px;background:#dcdee0;margin:12px 2px 0 0;}
.palette{margin-left:3px;}
.constrain .tools{padding-right:6px;}
.size .tools{padding:2px 7px 0 8px;gap:8px;}
.toggle{width:24px;height:24px;justify-content:center;}
.toggle.on{background:#d6d8da;border:1px solid #b4b7ba;border-top:2px solid #a0a3a6;}
.check .tools{padding-right:3px;gap:4px;}
.close .tools{padding:2px 7px 0;gap:8px;}
.glyph-a{font:bold 14px "Liberation Serif",serif;fill:#9b9ea0;}
.glyph-ref{font:bold 6px "Liberation Sans",sans-serif;fill:#2d3033;}

/* model tree */
.main{flex:1;min-height:0;display:flex;}
.side{width:227px;flex:none;margin-left:4px;padding-top:13px;display:flex;flex-direction:column;}
.side-tabs{display:flex;height:30px;margin-bottom:-1px;z-index:1;}
.stab{width:31px;justify-content:center;border:1px solid #c5c9cc;background:#eef0f2;margin-right:-1px;}
.stab.current{background:#fbfbfb;border-bottom-color:#fbfbfb;padding-left:2px;}
.panel{flex:1;border:1px solid #c5c9cc;border-right:3px solid #c5c9cc;border-bottom:0;display:flex;flex-direction:column;}
.panel-head{height:29px;border-bottom:1px solid #c5c9cc;display:flex;align-items:center;gap:9px;padding:0 4px 0 20px;}
.panel-head h2{flex:1;font-size:13px;line-height:16px;}
.panel-head .last{margin-left:4px;}
.tree{padding-top:6px;font-family:"Open Sans","Noto Sans CJK SC",sans-serif;}
.tree li{height:24px;display:flex;align-items:center;padding-left:10px;color:#444;}
.tree li > svg{margin-right:5px;}
.tree .latin{font-size:13px;}
.tree .l1{padding-left:30px;}
.tree .l2{padding-left:50px;}
.tree .open{padding-left:14px;}
.tree .off{color:#bbb;}
.tree .new{height:16px;margin-right:1px;}
.twisty{border:5px solid transparent;border-top:8px solid #808385;border-bottom:0;margin-right:6px;}

/* sketch area */
.canvas{flex:1;position:relative;background:#fff;overflow:hidden;}
.drawing{position:absolute;left:0;top:0;}
.ln{fill:none;stroke:#000;shape-rendering:crispEdges;}
.tip{fill:#000;}
.dim{font:15px "Open Sans",sans-serif;fill:#000;}
.viewbar{position:absolute;left:615px;top:7px;height:28px;display:flex;background:#eceef0;border:1px solid #c5c9cc;padding:0 4px;}
.viewbar button{width:27px;justify-content:center;background:#fdfdfd;border-left:1px solid #c5c9cc;position:relative;}
.viewbar .more{width:28px;}
.viewbar button:last-child{border-right:1px solid #c5c9cc;}
.viewbar .on{background:#e3e5e7;box-shadow:inset 1px 2px 0 #aeb1b4;}
.viewbar .more:after{content:"";position:absolute;right:1px;bottom:3px;border:2px solid #404447;border-top-color:transparent;border-left-color:transparent;}
.watermark{position:absolute;right:10px;bottom:6px;display:flex;align-items:center;}
.wm-text{display:flex;flex-direction:column;align-items:flex-end;margin-left:-4px;}
.wm-text strong{font:900 28px/38px "Noto Sans CJK SC",sans-serif;color:#a6dfbc;margin-right:12px;}
.wm-text span{font:15px/24px "Open Sans",sans-serif;color:#d0ebe3;}

/* pen marks */
.ink-layer{position:absolute;left:0;top:0;pointer-events:none;}
.ink{fill:none;stroke:#000;stroke-width:2;stroke-linecap:round;stroke-linejoin:round;}
```
FILE: script.js
```js
// smooth the pen strokes through their recorded points
document.querySelectorAll('.ink').forEach(function (path) {
  var p = path.getAttribute('data-pts').split(' ').map(function (s) {
    return s.split(',').map(Number);
  });
  var d = 'M' + p[0];
  for (var i = 0; i < p.length - 1; i++) {
    var a = p[i - 1] || p[i], b = p[i], c = p[i + 1], e = p[i + 2] || c;
    d += 'C' + [b[0] + (c[0] - a[0]) / 6, b[1] + (c[1] - a[1]) / 6,
                c[0] - (e[0] - b[0]) / 6, c[1] - (e[1] - b[1]) / 6, c[0], c[1]];
  }
  path.setAttribute('d', d);
});
```
